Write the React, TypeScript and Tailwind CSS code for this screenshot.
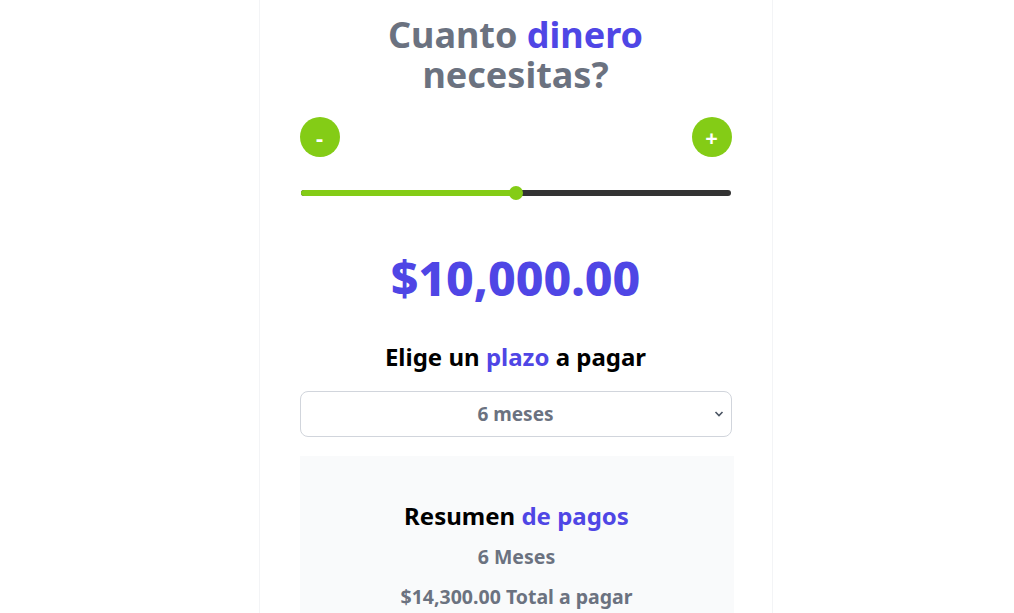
import { useState } from 'react'

const formatMoney = (n: number) =>
  '$' + n.toLocaleString('en-US', { minimumFractionDigits: 2, maximumFractionDigits: 2 })

export default function App() {
  const [monto, setMonto] = useState(10000)
  const [plazo, setPlazo] = useState(6)
  const min = 0
  const max = 20000
  const pct = ((monto - min) / (max - min)) * 100
  const total = monto * 1.43

  return (
    <div className="min-h-screen bg-white flex justify-center pl-[17px]" style={{ fontFamily: '"Noto Sans", sans-serif' }}>
      <div className="w-[514px] border-x border-gray-100 px-10 pt-[15px]">
        {/* Title */}
        <h1 className="text-center text-[#6b7280] font-bold text-[36px] leading-[40px] px-16">
          Cuanto <span className="text-[#4f46e5]">dinero</span> necesitas?
        </h1>

        {/* Controls */}
        <div className="flex justify-between mt-[22px]">
          <button
            onClick={() => setMonto((m) => Math.max(min, m - 1000))}
            className="w-10 h-10 rounded-full bg-[#84cc16] text-white font-bold text-[22px] flex items-center justify-center"
          >
            -
          </button>
          <button
            onClick={() => setMonto((m) => Math.min(max, m + 1000))}
            className="w-10 h-10 rounded-full bg-[#84cc16] text-white font-bold text-[22px] flex items-center justify-center"
          >
            +
          </button>
        </div>

        {/* Slider */}
        <div className="relative h-[14px] mt-[29px] mx-px">
          <div className="absolute inset-x-0 top-[4px] h-[6px] rounded-full bg-[#333333]" />
          <div className="absolute left-0 top-[4px] h-[6px] rounded-full bg-[#84cc16]" style={{ width: `${pct}%` }} />
          <div
            className="absolute top-0 w-[14px] h-[14px] -ml-[7px] rounded-full bg-[#84cc16]"
            style={{ left: `${pct}%` }}
          />
        </div>

        {/* Amount */}
        <p className="text-center text-[#4f46e5] font-extrabold text-[48px] leading-[48px] mt-[54px]">
          {formatMoney(monto)}
        </p>

        {/* Plazo */}
        <h2 className="text-center text-black font-bold text-[24px] leading-8 mt-[39px]">
          Elige un <span className="text-[#4f46e5]">plazo</span> a pagar
        </h2>

        <div className="relative mt-[18px]">
          <select
            value={plazo}
            onChange={(e) => setPlazo(Number(e.target.value))}
            className="w-full h-[46px] appearance-none border border-gray-300 rounded-lg bg-white text-center text-[#6b7280] font-bold text-[19px]"
            style={{ textAlignLast: 'center' }}
          >
            <option value={3}>3 meses</option>
            <option value={6}>6 meses</option>
            <option value={9}>9 meses</option>
            <option value={12}>12 meses</option>
          </select>
          <svg
            className="absolute right-[8px] top-[19px] pointer-events-none"
            width="10"
            height="8"
            viewBox="0 0 10 8"
            fill="none"
            stroke="#4b5563"
            strokeWidth="1.6"
          >
            <path d="M1.5 2l3.5 3.5L8.5 2" />
          </svg>
        </div>

        {/* Resumen */}
        <div className="bg-[#f9fafb] mt-[19px] w-[434px] pt-[44px] pb-6 text-center">
          <h3 className="text-black font-bold text-[24px] leading-8">
            Resumen <span className="text-[#4f46e5]">de pagos</span>
          </h3>
          <p className="text-[#6b7280] font-bold text-[19.5px] leading-7 mt-[11px]">{plazo} Meses</p>
          <p className="text-[#6b7280] font-bold text-[19.5px] leading-7 mt-[12px]">{formatMoney(total)} Total a pagar</p>
        </div>
      </div>
    </div>
  )
}
